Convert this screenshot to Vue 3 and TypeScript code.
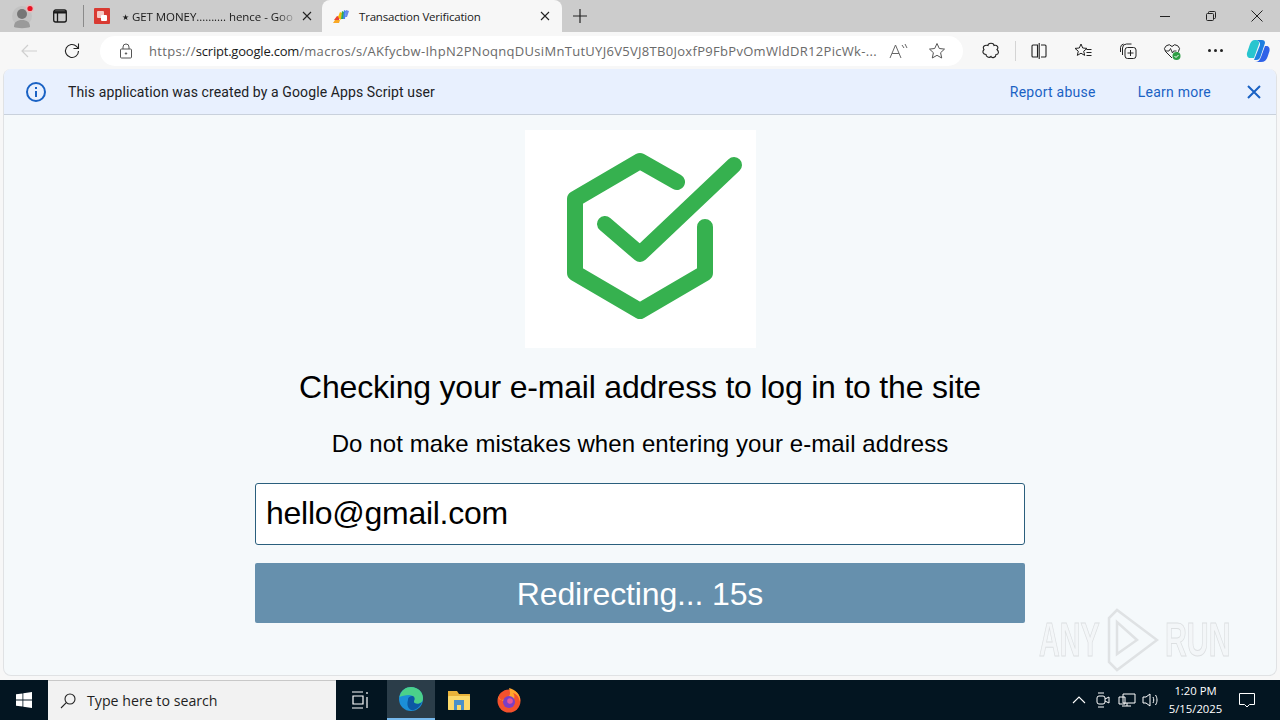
<template>
  <div class="screen">
    <!-- tab strip -->
    <div class="tabstrip">
      <div class="profile">
        <svg width="26" height="26" viewBox="0 0 26 26">
          <circle cx="11" cy="13" r="10" fill="#c2c2c2" />
          <circle cx="11" cy="11" r="5" fill="#767676" />
          <path d="M3 24c0-5 3-7 8-7s8 2 8 7c-3 1.500-13 1.500-16 0z" fill="#9a9a9a" />
          <circle cx="19" cy="5.500" r="4" fill="#e8b9b9" />
          <circle cx="19" cy="5.500" r="2.600" fill="#e81123" />
        </svg>
      </div>
      <div class="strip-btn">
        <svg width="16" height="16" viewBox="0 0 16 16" fill="none" stroke="#1a1a1a" stroke-width="1.300">
          <rect x="1.700" y="2" width="12.600" height="12" rx="2" />
          <path d="M2 4.300h12" stroke-width="2.400" />
          <path d="M5.500 5v9" />
        </svg>
      </div>
      <div class="strip-sep"></div>
      <div class="tab">
        <svg class="favicon" width="16" height="16" viewBox="0 0 16 16">
          <rect width="16" height="16" rx="1" fill="#d93a32" />
          <rect x="3" y="3" width="7" height="7" rx="1" fill="#f5c9c5" />
          <rect x="7" y="7" width="6" height="6" rx="1" fill="#fff" />
        </svg>
        <span class="tab-title faded"><span class="star">★</span> GET MONEY.......... hence - Goo</span>
        <svg class="tab-x" width="10" height="10" viewBox="0 0 10 10" stroke="#222" stroke-width="1.100">
          <path d="M1 1l8 8M9 1l-8 8" />
        </svg>
      </div>
      <div class="tab active">
        <svg class="favicon" width="16" height="16" viewBox="0 0 16 16">
          <path d="M1 12l3-4 3 1-1 3z" fill="#ea4335" />
          <path d="M0 15l2-3h5l-1 3z" fill="#f9a825" />
          <path d="M5 9l2-5 2 1-1 7z" fill="#fbbc04" />
          <path d="M8 11l1-8 2 1v7z" fill="#34a853" />
          <path d="M10 11l1-9 2 1-1 8z" fill="#4285f4" />
          <path d="M12 9l1-7 3 1-2 6z" fill="#6a8be8" />
        </svg>
        <span class="tab-title">Transaction Verification</span>
        <svg class="tab-x" width="10" height="10" viewBox="0 0 10 10" stroke="#222" stroke-width="1.100">
          <path d="M1 1l8 8M9 1l-8 8" />
        </svg>
      </div>
      <div class="new-tab">
        <svg width="16" height="16" viewBox="0 0 16 16" stroke="#222" stroke-width="1.200">
          <path d="M8 1v14M1 8h14" />
        </svg>
      </div>
      <div class="win-controls">
        <svg width="10" height="10" viewBox="0 0 10 10" stroke="#222"><path d="M0 5.500h10" /></svg>
        <svg width="10" height="10" viewBox="0 0 10 10" fill="none" stroke="#222">
          <rect x="0.500" y="2.500" width="7" height="7" rx="1" />
          <path d="M2.500 2.500v-1a1 1 0 0 1 1-1h5a1 1 0 0 1 1 1v5a1 1 0 0 1-1 1h-1" />
        </svg>
        <svg width="12" height="12" viewBox="0 0 12 12" stroke="#222"><path d="M.5.500l11 11M11.500.500l-11 11" /></svg>
      </div>
    </div>

    <!-- address bar -->
    <div class="toolbar">
      <svg class="back" width="18" height="16" viewBox="0 0 18 16" fill="none" stroke="#cfcfcf" stroke-width="1.200">
        <path d="M17 8H2M8 2L2 8l6 6" />
      </svg>
      <svg class="reload" width="18" height="18" viewBox="0 0 18 18" fill="none" stroke="#222" stroke-width="1.100">
        <path d="M15.500 9a6.500 6.500 0 1 1-2-4.700L15.500 6.500M15.500 1.500v5h-5" />
      </svg>
      <div class="address">
        <svg width="14" height="16" viewBox="0 0 14 16" fill="none" stroke="#555" stroke-width="1">
          <rect x="1.500" y="6" width="11" height="9" rx="1" />
          <path d="M4 6V4a3 3 0 0 1 6 0v2" />
          <circle cx="7" cy="10.500" r="0.700" fill="#555" />
        </svg>
        <div class="url"><span class="url-dim">https://</span><span class="url-host">script.google.com</span><span class="url-dim">/macros/s/AKfycbw-IhpN2PNoqnqDUsiMnTutUYJ6V5VJ8TB0JoxfP9FbPvOmWldDR12PicWk-...</span></div>
        <svg class="read-aloud" width="20" height="16" viewBox="0 0 20 16" fill="none" stroke="#666" stroke-width="1">
          <path d="M1 15L6.500 2 12 15M3 10.500h7M13 2l2 3M16 1l2 4" />
        </svg>
        <svg class="fav-star" width="18" height="18" viewBox="0 0 18 18" fill="none" stroke="#555" stroke-width="1">
          <path d="M9 1.500l2.300 5 5.200.6-3.900 3.600 1.100 5.300L9 13.300 4.300 16l1.100-5.300L1.500 7.100l5.200-.6z" />
        </svg>
      </div>
      <div class="tools">
        <svg class="tool" width="18" height="18" viewBox="0 0 18 18" fill="none" stroke="#222" stroke-width="1.100">
          <path d="M6 3.500c0-3 6-3 6 0 3-1 5 2 3 4 2 2 2 5-1 5 0 3-4 4-5 2-2 2-5 0-5-2-3 0-4-3-2-5-2-3 1-5 4-4z" />
        </svg>
        <div class="tool-sep"></div>
        <svg class="tool" width="18" height="18" viewBox="0 0 18 18" fill="none" stroke="#222" stroke-width="1.100">
          <path d="M7.500 3H3a1 1 0 0 0-1 1v10a1 1 0 0 0 1 1h4.500zM11 3h4a1 1 0 0 1 1 1v10a1 1 0 0 1-1 1h-4M9.200 1v16" />
        </svg>
        <svg class="tool" width="18" height="18" viewBox="0 0 18 18" fill="none" stroke="#222" stroke-width="1">
          <path d="M7 2l1.700 4 4.300.4-3.300 2.800 1 4.200L7 11.200l-3.700 2.200 1-4.200L1 6.400 5.300 6zM12.500 7.500h5M12.500 10.500h5M12.500 13.500h5" />
        </svg>
        <svg class="tool" width="18" height="18" viewBox="0 0 18 18" fill="none" stroke="#222" stroke-width="1">
          <rect x="6" y="5.500" width="11" height="11" rx="2.500" />
          <path d="M3.500 13V6a4 4 0 0 1 4-4h5M1.500 10V5.500a4 4 0 0 1 3-3.500M11.500 8v6M8.500 11h6" />
        </svg>
        <svg class="tool" width="18" height="18" viewBox="0 0 18 18" fill="none">
          <path d="M9 16L2.500 9.500a4 4 0 0 1 6.500-5 4 4 0 0 1 6.500 5L14 11" stroke="#222" stroke-width="1" />
          <path d="M2 9h4l1.500-2.500 2 4.500 1-2h3" stroke="#222" stroke-width="0.900" />
          <circle cx="13.500" cy="14" r="4" fill="#2e9e44" />
          <path d="M11.500 14l1.500 1.500 2.500-2.500" stroke="#fff" />
        </svg>
        <div class="more">
          <i></i><i></i><i></i>
        </div>
        <svg class="copilot" width="24" height="24" viewBox="0 0 24 24">
          <path d="M8 1h8c2 0 3 1 3 3l-4 12c-.7 3-2 5-5 5H8l6-15c.5-2-1-5-6-5z" fill="#1f7fe0" />
          <path d="M9 1C6 1 5 3 4 5l-3 9c-.5 3 1 5 3 5h4l5-14c.5-2-1-4-4-4z" fill="#28c5cf" />
          <path d="M15 23H9c3 0 5-2 6-5l4-11h1c3 0 4 2 3.500 5l-2 6c-1 3-3 5-6.500 5z" fill="#2f62e8" />
        </svg>
      </div>
    </div>

    <!-- page viewport -->
    <div class="viewport">
      <div class="banner">
        <svg class="info" width="22" height="22" viewBox="0 0 22 22" fill="none" stroke="#1a62c4" stroke-width="2">
          <circle cx="11" cy="11" r="9" />
          <path d="M11 10v6M11 6v2" />
        </svg>
        <span class="banner-text">This application was created by a Google Apps Script user</span>
        <a class="banner-link report">Report abuse</a>
        <a class="banner-link learn">Learn more</a>
        <svg class="banner-x" width="14" height="14" viewBox="0 0 14 14" stroke="#1a62c4" stroke-width="2">
          <path d="M1 1l12 12M13 1L1 13" />
        </svg>
      </div>

      <div class="page">
        <div class="logo">
          <svg width="231" height="218" viewBox="0 0 231 218" fill="none" stroke="#36b14f" stroke-width="16" stroke-linecap="round" stroke-linejoin="round">
            <path d="M152 52L115 31 50 69v74l65 38 65-38V97" />
            <path d="M80 94l35 30 94-89" />
          </svg>
        </div>
        <h1 class="title">Checking your e-mail address to log in to the site</h1>
        <p class="subtitle">Do not make mistakes when entering your e-mail address</p>
        <div class="email">hello@gmail.com</div>
        <div class="redirect">Redirecting... {{ seconds }}s</div>
      </div>

      <!-- sandbox watermark -->
      <div class="watermark">
        <span class="wm-any">ANY</span>
        <svg width="56" height="64" viewBox="0 0 56 64" fill="none" stroke="#dfe2e4" stroke-width="2.500">
          <path d="M6 10v44l8 8 40-30L14 2zM14 14v32l20-14z" />
        </svg>
        <span class="wm-run">RUN</span>
      </div>
    </div>

    <!-- windows taskbar -->
    <div class="taskbar">
      <div class="start">
        <svg width="16" height="16" viewBox="0 0 16 16" fill="#fff">
          <path d="M0 2.300l6.500-.9v6.200H0zM7.300 1.300L16 0v7.600H7.300zM0 8.400h6.500v6.200L0 13.700zM7.300 8.400H16V16l-8.700-1.300z" />
        </svg>
      </div>
      <div class="search">
        <svg width="16" height="16" viewBox="0 0 16 16" fill="none" stroke="#222" stroke-width="1.100">
          <circle cx="10" cy="6" r="5" />
          <path d="M6.300 9.700L1 15" />
        </svg>
        <span>Type here to search</span>
      </div>
      <div class="task-item task-view">
        <svg width="18" height="18" viewBox="0 0 18 18" fill="none" stroke="#fff" stroke-width="1.200">
          <path d="M1 1h11M1 17h11M2 5h10v8H2zM16 1v2M16 6v11" />
        </svg>
      </div>
      <div class="task-item edge">
        <svg width="26" height="26" viewBox="0 0 26 26">
          <circle cx="13" cy="13" r="12" fill="#1b8fd8" />
          <path d="M1.500 11C3 4 8 1 13 1c7 0 12 5 12 11 0 4-3 6-6 6-2 0-4-1-3-3 1-3-1-6-5-6-4 0-7 1-9.500 2z" fill="#4bd08a" />
          <path d="M10 14c0-3 2-4 5-4 2 1 2 3 1 5-1 3 5 4 8 1-2 5-7 9-11 8-4-2-4-7-3-10z" fill="#0c59a4" />
        </svg>
      </div>
      <div class="task-item">
        <svg width="24" height="22" viewBox="0 0 24 22">
          <path d="M1 2h9l2 3h11v15a1 1 0 0 1-1 1H2a1 1 0 0 1-1-1z" fill="#e8b23a" />
          <rect x="1" y="7" width="22" height="14" rx="1" fill="#fbd96b" />
          <path d="M7 11h10v10h-3v-5h-4v5H7z" fill="#4a90c8" />
        </svg>
      </div>
      <div class="task-item firefox">
        <svg width="26" height="26" viewBox="0 0 26 26">
          <circle cx="13" cy="14" r="11.500" fill="#f4512c" />
          <path d="M2 9c1 7 7 3 10 1 3-2 2-6 1-9 7 2 12 7 11 14-1-5-3-8-7-9 3 4 1 8-3 8-5 0-9 1-12-5z" fill="#ffa52c" />
          <circle cx="13" cy="15" r="6" fill="#7b3fc4" />
          <circle cx="14" cy="14" r="2.800" fill="#e8559a" />
        </svg>
      </div>
      <div class="tray">
        <svg class="tray-chevron" width="14" height="8" viewBox="0 0 14 8" fill="none" stroke="#fff" stroke-width="1.100"><path d="M1 7l6-6 6 6" /></svg>
        <svg width="16" height="18" viewBox="0 0 16 18" fill="none" stroke="#fff"><rect x="2" y="5" width="8" height="8" rx="2" /><path d="M10 8l4-2v6l-4-2M3 2h6M3 16h6" /></svg>
        <svg class="tray-net" width="18" height="16" viewBox="0 0 18 16" fill="none" stroke="#fff"><path d="M5 2h12v9H5zM1 5h6v7H1zM4 14h9M9 11v3" /></svg>
        <svg width="18" height="16" viewBox="0 0 18 16" fill="none" stroke="#fff"><path d="M1 5h3l4-3v12l-4-3H1zM11 5c1 2 1 4 0 6M13.500 3c2 3 2 7 0 10" /></svg>
        <div class="clock">
          <div>1:20 PM</div>
          <div>5/15/2025</div>
        </div>
        <svg class="notify" width="16" height="16" viewBox="0 0 16 16" fill="none" stroke="#fff"><path d="M.5 1.500h15v11h-5L8 15l-2.500-2.500h-5z" /></svg>
      </div>
    </div>
  </div>
</template>

<script setup lang="ts">
import { ref } from "vue";

const seconds = ref(15);
</script>

<style>
html,
body {
  margin: 0;
  overflow: hidden;
}
</style>

<style scoped>
.screen {
  width: 1280px;
  height: 720px;
  display: flex;
  flex-direction: column;
  background: #f7f7f7;
  font-family: "Open Sans", "Liberation Sans", sans-serif;
}

.tabstrip {
  height: 32px;
  flex: none;
  background: #cccccc;
  display: flex;
  align-items: center;
}

.profile {
  width: 26px;
  height: 26px;
  margin-left: 11px;
}

.strip-btn {
  margin-left: 15px;
  display: flex;
}

.strip-sep {
  width: 1px;
  height: 22px;
  background: #8a8a8a;
  margin-left: 15px;
  margin-right: 10px;
}

.tab {
  width: 227px;
  height: 32px;
  box-sizing: border-box;
  display: flex;
  align-items: center;
  padding-right: 9px;
  font-size: 11.500px;
  color: #1a1a1a;
  flex: none;
}

.tab.active {
  width: 240px;
  padding-left: 11px;
  padding-right: 12px;
  margin-left: 1px;
  background: #f7f7f7;
  border-radius: 8px 8px 0 0;
}

.favicon {
  flex: none;
}

.tab-title {
  flex: 1;
  margin-left: 11px;
  margin-right: 4px;
  white-space: nowrap;
  letter-spacing: -0.200px;
}

.tab.active .tab-title {
  margin-left: 10px;
}

.faded {
  margin-left: 12px;
  letter-spacing: -0.050px;
  mask-image: linear-gradient(to right, #000 88%, transparent);
}

.star {
  font-size: 8px;
  vertical-align: 1px;
}

.tab-x {
  flex: none;
}

.new-tab {
  margin-left: 10px;
  display: flex;
}

.win-controls {
  margin-left: auto;
  width: 103px;
  margin-right: 17px;
  display: flex;
  justify-content: space-between;
  align-items: center;
}

.toolbar {
  height: 37px;
  flex: none;
  display: flex;
  align-items: center;
}

.back {
  margin-left: 20px;
}

.reload {
  margin-left: 25px;
}

.address {
  margin-left: 19px;
  width: 863px;
  height: 30px;
  flex: none;
  background: #fff;
  border-radius: 15px;
  display: flex;
  align-items: center;
  padding-left: 19px;
  box-sizing: border-box;
}

.url {
  margin-left: 16px;
  font-size: 13px;
  width: 732px;
  white-space: nowrap;
}

.url-dim {
  color: #6a6a6a;
  letter-spacing: 0.300px;
}

.url-host {
  color: #1a1a1a;
  letter-spacing: -0.200px;
}

.read-aloud {
  margin-left: 8px;
}

.fav-star {
  margin-left: 19px;
}

.tools {
  display: flex;
  align-items: center;
  margin-left: 19px;
}

.tool {
  flex: none;
  margin-right: 26.500px;
}

.tool-sep {
  width: 1px;
  height: 20px;
  background: #d4d4d4;
  margin: 0 14px 0 -12px;
}

.more {
  display: flex;
  gap: 3px;
  margin-right: 23px;
}

.more i {
  width: 3px;
  height: 3px;
  border-radius: 50%;
  background: #222;
}

.viewport {
  flex: 1;
  margin: 0 3px 4px;
  background: #f5f9fb;
  border: 1px solid #e0e2e4;
  border-top: none;
  border-radius: 8px;
  position: relative;
  display: flex;
  flex-direction: column;
  overflow: hidden;
}

.banner {
  height: 45px;
  flex: none;
  background: #e8f0fe;
  border-bottom: 1px solid #c9d1dc;
  display: flex;
  align-items: center;
  padding-left: 21px;
  font-family: Roboto, "Liberation Sans", sans-serif;
  font-size: 14px;
}

.banner-text {
  margin-left: 21px;
  color: #202124;
  letter-spacing: 0.110px;
}

.banner-link {
  color: #1a62c4;
  letter-spacing: 0.250px;
}

.report {
  margin-left: auto;
}

.learn {
  margin-left: 42px;
}

.banner-x {
  margin-left: 36px;
  margin-right: 15px;
}

.page {
  flex: 1;
  display: flex;
  flex-direction: column;
  align-items: center;
  padding-top: 15px;
  font-family: "Liberation Sans", Arial, sans-serif;
  color: #000;
}

.logo {
  width: 231px;
  height: 218px;
  background: #fff;
  flex: none;
}

.title {
  margin: 20px 0 0;
  font-size: 32px;
  font-weight: 400;
  line-height: 38px;
  letter-spacing: -0.200px;
}

.subtitle {
  margin: 24px 0 0;
  font-size: 24px;
  line-height: 28px;
  letter-spacing: 0.080px;
}

.email {
  width: 770px;
  height: 62px;
  margin-top: 25px;
  box-sizing: border-box;
  border: 1px solid #2a5f7d;
  border-radius: 3px;
  background: #fff;
  padding-left: 10px;
  font-size: 32px;
  line-height: 58px;
  letter-spacing: -0.270px;
}

.redirect {
  width: 770px;
  height: 60px;
  margin-top: 18px;
  background: #6690ad;
  border-radius: 2px;
  color: #fff;
  text-align: center;
  font-size: 32px;
  line-height: 62px;
  letter-spacing: -0.150px;
}

.watermark {
  position: absolute;
  right: 44px;
  bottom: 3px;
  display: flex;
  align-items: center;
  gap: 6px;
  font-family: "Liberation Sans", sans-serif;
  font-size: 48px;
  font-weight: 700;
  line-height: 64px;
  color: #f3f6f8;
  -webkit-text-stroke: 1px #dcdfe1;
}

.wm-any,
.wm-run {
  display: block;
  white-space: nowrap;
  transform-origin: left center;
}

.wm-any {
  width: 58px;
  transform: scaleX(0.6);
}

.wm-run {
  width: 67px;
  transform: scaleX(0.63);
}

.taskbar {
  height: 40px;
  flex: none;
  background: #031521;
  display: flex;
  align-items: stretch;
  color: #fff;
}

.start {
  width: 48px;
  display: flex;
  align-items: center;
  justify-content: center;
}

.search {
  width: 288px;
  box-sizing: border-box;
  background: #f2f2f2;
  border-top: 1px solid #c8c8c8;
  display: flex;
  align-items: center;
  gap: 11px;
  padding-left: 12px;
  font-size: 14.200px;
  color: #1f1f1f;
}

.task-item {
  width: 48px;
  display: flex;
  align-items: center;
  justify-content: center;
  flex: none;
}

.task-view {
  margin-right: 3px;
}

.firefox {
  margin-left: 2px;
}

.edge {
  background: #2b3d49;
  border-bottom: 2px solid #76b9ed;
  box-sizing: border-box;
}

.tray {
  margin-left: auto;
  display: flex;
  align-items: center;
  gap: 7px;
  padding-right: 25px;
}

.tray-chevron {
  margin-right: 2px;
}

.tray-net {
  margin-right: -1px;
}

.clock {
  margin-left: -4px;
  text-align: center;
  font-size: 11.300px;
  line-height: 18px;
  width: 65px;
}

.notify {
  margin-left: 4px;
}
</style>
